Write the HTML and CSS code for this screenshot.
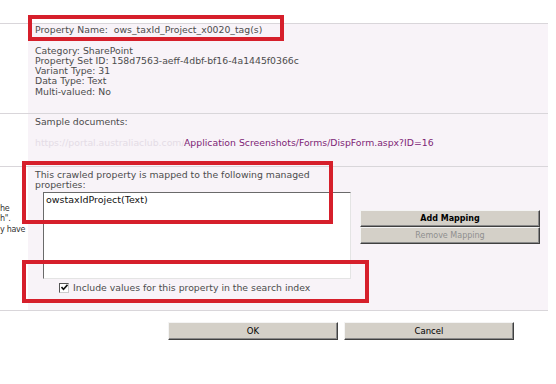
FILE: index.html
```html
<!DOCTYPE html>
<html lang="en">
<head>
    <meta charset="UTF-8">
    <title>Edit Crawled Property</title>
    <link rel="stylesheet" href="styles.css">
</head>
<body>
<div class="page">

    <!-- Property details -->
    <div class="row row-name">
        <div class="side"></div>
        <div class="main">
            <p>Property Name:&nbsp; ows_taxId_Project_x0020_tag(s)</p>
            <p class="details">
                Category: SharePoint<br>
                Property Set ID: 158d7563-aeff-4dbf-bf16-4a1445f0366c<br>
                Variant Type: 31<br>
                Data Type: Text<br>
                Multi-valued: No
            </p>
        </div>
    </div>

    <!-- Sample documents -->
    <div class="row row-docs">
        <div class="side"></div>
        <div class="main">
            <p>Sample documents:</p>
            <p class="sample"><span class="hidden-host">https://portal.australiaclub.com/</span><a href="#">Application Screenshots/Forms/DispForm.aspx?ID=16</a></p>
        </div>
    </div>

    <!-- Mappings -->
    <div class="row row-map">
        <div class="side"><p>he<br>h".<br>y have</p></div>
        <div class="main">
            <p>This crawled property is mapped to the following managed<br>properties:</p>
            <div class="map-area">
                <div class="listbox">
                    <div class="option">owstaxIdProject(Text)</div>
                </div>
                <div class="map-buttons">
                    <button class="btn btn-default">Add Mapping</button>
                    <button class="btn" disabled>Remove Mapping</button>
                </div>
            </div>
            <label class="include">
                <span class="check">
                    <svg width="7" height="7" viewBox="0 0 7 7"><path d="M0.5 3 L2.5 5.2 L6.5 0.8" fill="none" stroke="#111" stroke-width="1.6"/></svg>
                </span>
                Include values for this property in the search index
            </label>
        </div>
    </div>

    <div class="footer">
        <button class="btn btn-wide">OK</button>
        <button class="btn btn-wide">Cancel</button>
    </div>

    <!-- annotation boxes drawn over the screenshot -->
    <div class="callout callout-name"></div>
    <div class="callout callout-map"></div>
    <div class="callout callout-include"></div>
</div>
</body>
</html>
```

FILE: styles.css
```css
body {
    margin: 0;
    padding: 0;
    background-color: #fff;
    font-family: "DejaVu Sans", Verdana, sans-serif;
    font-size: 9.3px;
    color: #4c4c4c;
}

p {
    margin: 0;
    line-height: 10.3px;
}

.page {
    position: relative;
    width: 556px;
    height: 384px;
    padding-top: 23px;
    box-sizing: border-box;
}

.row {
    display: flex;
    width: 548px;
    border-top: 1px solid #d9d6da;
}

.side {
    width: 28px;
    flex-shrink: 0;
    background-color: #fff;
    white-space: nowrap;
}

.main {
    flex: 1;
    background-color: #f8f3f8;
    padding-left: 7px;
}

.row-name {
    height: 89px;
}

.row-name .main {
    padding-top: 1px;
}

.details {
    margin-top: 10.3px;
}

.row-docs {
    height: 52px;
}

.row-docs .main {
    padding-top: 3px;
}

.sample {
    margin-top: 10.5px;
    white-space: nowrap;
}

.hidden-host {
    display: inline-block;
    width: 149px;
    overflow: hidden;
    vertical-align: top;
    color: #e4dce6;
}

.sample a {
    color: #7e2576;
    text-decoration: none;
}

.row-map {
    height: 143px;
}

.row-map .main {
    padding-top: 3px;
}

.row-map .side p {
    margin-top: 37px;
    color: #333;
    font-size: 8px;
    letter-spacing: -0.3px;
}

.map-area {
    display: flex;
    align-items: flex-start;
    margin-left: 8px;
    margin-top: 1px;
}

.listbox {
    width: 302px;
    height: 83px;
    background-color: #fff;
    border: 1px solid;
    border-color: #6a6a6a #e4e4e4 #e4e4e4 #6a6a6a;
    padding: 1px 2px;
    box-sizing: content-box;
}

.option {
    font-size: 9.5px;
    color: #111;
    line-height: 11px;
}

.map-buttons {
    display: flex;
    flex-direction: column;
    margin-left: 9px;
    margin-top: 18px;
}

.btn {
    font-family: "DejaVu Sans", Tahoma, sans-serif;
    font-size: 8px;
    color: #000;
    background-color: #d4d0c8;
    border: 1px solid;
    border-color: #f4f4f4 #404040 #404040 #f4f4f4;
    box-shadow: inset -1px -1px #8a8a8a;
    padding: 0;
    margin: 0;
    width: 180px;
    height: 17px;
}

.btn-default {
    font-weight: bold;
}

.btn:disabled {
    color: #8f8f8f;
}

.include {
    display: flex;
    align-items: center;
    margin-top: 4px;
    margin-left: 24px;
    line-height: 10px;
}

.check {
    display: inline-flex;
    align-items: center;
    justify-content: center;
    width: 8px;
    height: 8px;
    margin-right: 4px;
    background-color: #fff;
    border: 1px solid;
    border-color: #555 #ccc #ccc #555;
}

.footer {
    display: flex;
    gap: 6px;
    width: 548px;
    border-top: 1px solid #d9d6da;
    padding-top: 11px;
    padding-left: 168px;
    box-sizing: border-box;
}

.btn-wide {
    width: 170px;
    height: 18px;
    font-size: 8.5px;
}

/* red annotation frames */
.callout {
    position: absolute;
    border: 4px solid #d61f2b;
    box-sizing: border-box;
}

.callout-name {
    left: 28px;
    top: 15px;
    width: 256px;
    height: 26px;
}

.callout-map {
    left: 22px;
    top: 161px;
    width: 311px;
    height: 63px;
}

.callout-include {
    left: 22px;
    top: 260px;
    width: 347px;
    height: 43px;
}
```
